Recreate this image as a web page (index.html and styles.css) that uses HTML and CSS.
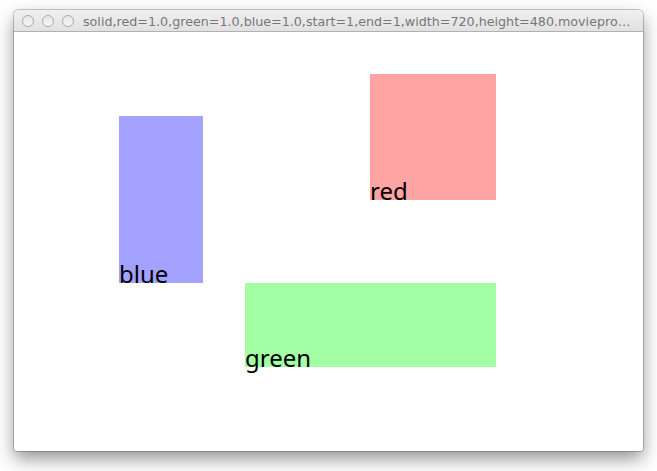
FILE: index.html
```html
<!DOCTYPE html>
<html>
<head>
<meta charset="utf-8">
<link rel="stylesheet" href="styles.css">
</head>
<body>
<div class="window">
  <div class="titlebar">
    <div class="lights">
      <span class="light"></span>
      <span class="light"></span>
      <span class="light"></span>
    </div>
    <div class="title">solid,red=1.0,green=1.0,blue=1.0,start=1,end=1,width=720,height=480.moviepro…</div>
  </div>
  <div class="canvas">
    <div class="rect rect-blue"><span class="label">blue</span></div>
    <div class="rect rect-red"><span class="label">red</span></div>
    <div class="rect rect-green"><span class="label">green</span></div>
  </div>
</div>
</body>
</html>
```
FILE: styles.css
```css
html, body {
  margin: 0;
  padding: 0;
  background: #ffffff;
}
body {
  padding: 10px 0 0 14px;
  min-height: 471px;
  box-sizing: border-box;
}
.window {
  width: 629px;
  height: 441px;
  display: flex;
  flex-direction: column;
  border-radius: 5px 5px 3px 3px;
  background: #ffffff;
  box-shadow: 0 0 0 1px rgba(0,0,0,0.2), 0 8px 18px rgba(0,0,0,0.42);
  overflow: hidden;
}
.titlebar {
  height: 21px;
  flex: none;
  display: flex;
  align-items: center;
  background: linear-gradient(#f0f0f0, #e1e1e1);
  border-bottom: 1px solid #b1b1b1;
}
.lights {
  display: flex;
  gap: 8px;
  padding-left: 8px;
  padding-right: 9px;
}
.light {
  width: 12px;
  height: 12px;
  border-radius: 50%;
  border: 1px solid #ababab;
  box-sizing: border-box;
  background: linear-gradient(#e6e6e6, #f8f8f8);
}
.title {
  font-family: "DejaVu Sans", sans-serif;
  font-size: 12.7px;
  color: #777777;
  white-space: nowrap;
  overflow: hidden;
  margin-top: 1px;
}
.canvas {
  position: relative;
  flex: 1;
  background: #ffffff;
}
.rect {
  position: absolute;
}
.rect-blue {
  left: 105px;
  top: 84px;
  width: 84px;
  height: 167px;
  background: #a3a3ff;
}
.rect-red {
  left: 356px;
  top: 42px;
  width: 126px;
  height: 126px;
  background: #ffa3a3;
}
.rect-green {
  left: 231px;
  top: 251px;
  width: 251px;
  height: 84px;
  background: #a3ffa3;
}
.label {
  position: absolute;
  left: 0;
  bottom: -3px;
  font-family: "Noto Sans", sans-serif;
  font-size: 24px;
  line-height: 24px;
  color: #000000;
}
```
